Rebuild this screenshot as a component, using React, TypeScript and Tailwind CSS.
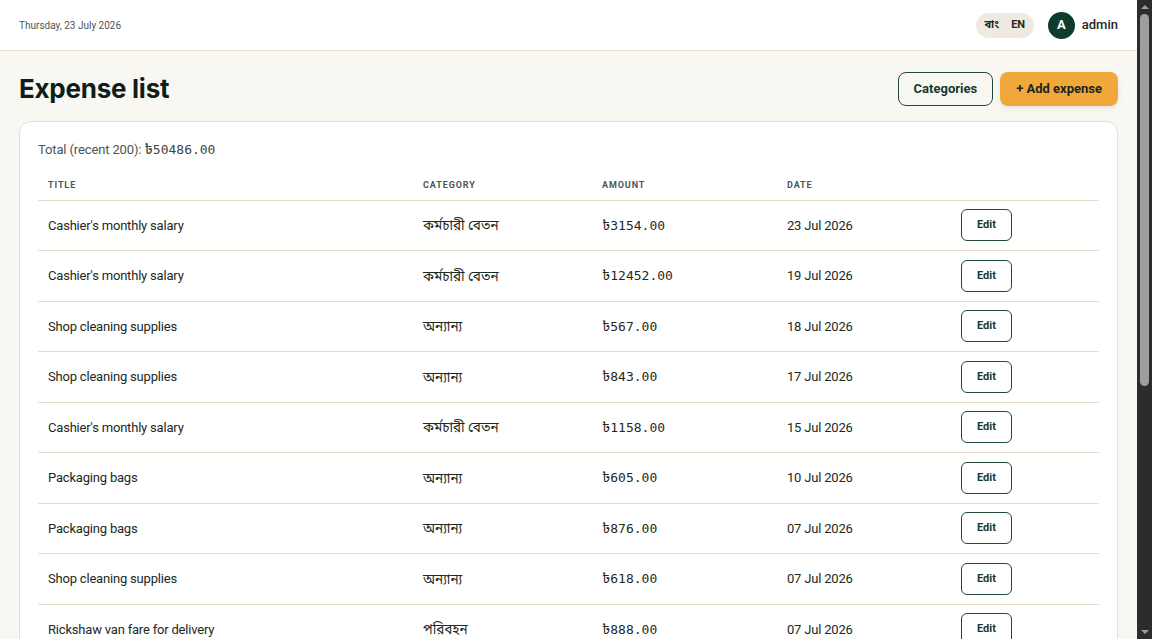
import { useState } from "react";

type Expense = {
	id: number;
	title: string;
	category: string;
	amount: string;
	date: string;
};

const EXPENSES: Expense[] = [
	{ id: 1, title: "Cashier's monthly salary", category: "কর্মচারী বেতন", amount: "3154.00", date: "23 Jul 2026" },
	{ id: 2, title: "Cashier's monthly salary", category: "কর্মচারী বেতন", amount: "12452.00", date: "19 Jul 2026" },
	{ id: 3, title: "Shop cleaning supplies", category: "অন্যান্য", amount: "567.00", date: "18 Jul 2026" },
	{ id: 4, title: "Shop cleaning supplies", category: "অন্যান্য", amount: "843.00", date: "17 Jul 2026" },
	{ id: 5, title: "Cashier's monthly salary", category: "কর্মচারী বেতন", amount: "1158.00", date: "15 Jul 2026" },
	{ id: 6, title: "Packaging bags", category: "অন্যান্য", amount: "605.00", date: "10 Jul 2026" },
	{ id: 7, title: "Packaging bags", category: "অন্যান্য", amount: "876.00", date: "07 Jul 2026" },
	{ id: 8, title: "Shop cleaning supplies", category: "অন্যান্য", amount: "618.00", date: "07 Jul 2026" },
	{ id: 9, title: "Rickshaw van fare for delivery", category: "পরিবহন", amount: "888.00", date: "07 Jul 2026" },
	{ id: 10, title: "Shop rent", category: "ভাড়া", amount: "15000.00", date: "01 Jul 2026" },
];

const SANS = "font-['Roboto','Noto_Sans_Bengali','Lohit_Bengali','Noto_Sans',sans-serif]";
const MONO = "font-['DejaVu_Sans_Mono','Liberation_Mono',monospace]";
const TAKA = "font-['Noto_Sans_Bengali','Lohit_Bengali','FreeSans',sans-serif] text-[14px] leading-none";

function Scrollbar() {
	return (
		<div className="flex w-[15px] shrink-0 flex-col items-center bg-[#2c2c2c]">
			<div className="mt-[5px] h-0 w-0 border-x-[4px] border-b-[4px] border-x-transparent border-b-[#9d9d9d]" />
			<div className="mt-[5px] h-[372px] w-[9px] rounded-full bg-[#9e9e9e]" />
			<div className="flex-1" />
			<div className="mb-[5px] h-0 w-0 border-x-[4px] border-t-[4px] border-x-transparent border-t-[#9d9d9d]" />
		</div>
	);
}

export default function App() {
	const [lang, setLang] = useState<"bn" | "en">("en");

	return (
		<div className={`flex h-screen overflow-hidden bg-[#f9f7f1] text-[#1c2925] ${SANS}`}>
			<div className="min-w-0 flex-1">
				<header className="flex h-[51px] items-center justify-between border-b border-[#e9e0cc] bg-white px-[19px]">
					<span className="text-[10px] text-[#4b5553]">Thursday, 23 July 2026</span>
					<div className="flex items-center gap-[14px]">
						<div className="flex h-[25px] w-[58px] items-center justify-center gap-[12px] rounded-full bg-[#efeadf]">
							<button
								onClick={() => setLang("bn")}
								className={`text-[11px] font-bold ${lang === "bn" ? "text-[#0e3b2c]" : "text-[#1c2925]"}`}
							>
								বাং
							</button>
							<button
								onClick={() => setLang("en")}
								className="text-[11px] font-bold text-[#1c2925]"
							>
								EN
							</button>
						</div>
						<div className="flex items-center gap-[7px]">
							<div className="flex h-[27px] w-[27px] items-center justify-center rounded-full bg-[#0e3b2c] text-[13px] font-bold text-white">
								A
							</div>
							<span className="text-[13px] font-medium text-[#1c2925]">admin</span>
						</div>
					</div>
				</header>

				<main className="px-[19px] pt-[21px]">
					<div className="mb-[15px] flex items-center justify-between">
						<h1 className="font-['Inter',sans-serif] text-[26px] leading-[34px] font-bold tracking-[-0.01em] text-[#0f1e1a]">
							Expense list
						</h1>
						<div className="flex items-center gap-[7px]">
							<button className="h-[34px] rounded-lg border border-[#1f4a3b] px-[15px] text-[13px] font-bold text-[#173a30]">
								Categories
							</button>
							<button className="h-[34px] rounded-lg bg-[#f1a83b] px-[16px] text-[13px] font-bold text-[#1c2520] shadow-[0_2px_6px_rgba(0,0,0,0.08)]">
								+ Add expense
							</button>
						</div>
					</div>

					<div className="rounded-xl border border-[#e8e0cd] bg-white px-[18px] pt-[18px] pb-2">
						<p className="text-[13px] leading-[19px] tracking-[-0.01em] text-[#4b5553]">
							Total (recent 200):{" "}
							<span className={`${MONO} font-medium tracking-normal text-[#3c4745]`}>
								<span className={TAKA}>৳</span>50486.00
							</span>
						</p>
						<table className="mt-[11px] w-full table-fixed border-collapse text-[13px] tracking-[-0.015em]">
							<colgroup>
								<col className="w-[375px]" />
								<col className="w-[179px]" />
								<col className="w-[185px]" />
								<col className="w-[174px]" />
								<col />
							</colgroup>
							<thead>
								<tr className="border-b border-[#e6ddcc]">
									{["Title", "Category", "Amount", "Date", ""].map((h, i) => (
										<th
											key={i}
											className="h-[30px] px-[10px] pt-[2px] text-left text-[9px] font-bold uppercase tracking-[0.1em] text-[#4d5654]"
										>
											{h}
										</th>
									))}
								</tr>
							</thead>
							<tbody>
								{EXPENSES.map((e) => (
									<tr key={e.id} className="h-[50.5px] border-b border-[#e6ddcc]">
										<td className="px-[10px]">{e.title}</td>
										<td className="px-[10px] text-[13.5px] tracking-normal">{e.category}</td>
										<td className={`px-[10px] ${MONO} text-[13px] tracking-normal text-[#1f2a27]`}>
											<span className={TAKA}>৳</span>
											{e.amount}
										</td>
										<td className="px-[10px]">{e.date}</td>
										<td className="px-[10px]">
											<button className="h-[32px] w-[51px] rounded-md border border-[#1f4a3b] text-[11px] font-bold tracking-normal text-[#173a30]">
												Edit
											</button>
										</td>
									</tr>
								))}
							</tbody>
						</table>
					</div>
				</main>
			</div>
			<Scrollbar />
		</div>
	);
}
